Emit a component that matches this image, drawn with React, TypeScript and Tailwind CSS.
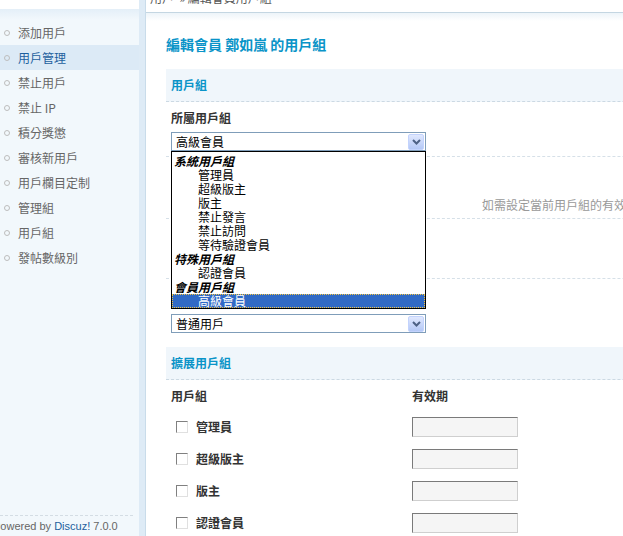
import React from "react"

const font = { fontFamily: '"Noto Sans CJK TC", "Noto Sans", sans-serif' }

const menu = ["添加用戶", "用戶管理", "禁止用戶", "禁止 IP", "積分獎懲", "審核新用戶", "用戶欄目定制", "管理組", "用戶組", "發帖數級別"]

const options: { label: string; group?: boolean; active?: boolean }[] = [
  { label: "系統用戶組", group: true },
  { label: "管理員" },
  { label: "超級版主" },
  { label: "版主" },
  { label: "禁止發言" },
  { label: "禁止訪問" },
  { label: "等待驗證會員" },
  { label: "特殊用戶組", group: true },
  { label: "認證會員" },
  { label: "會員用戶組", group: true },
  { label: "高級會員", active: true },
]

const extGroups = ["管理員", "超級版主", "版主", "認證會員"]

function SelectBox({ value }: { value: string }) {
  return (
    <div className="flex items-center w-[255px] h-[19px] border border-[#7f9db9] bg-white pl-[4px] pr-px">
      <span className="flex-1 text-[12px] text-black leading-none">{value}</span>
      <span className="w-[16px] h-[16px] flex items-center justify-center rounded-[2px] border border-[#c3d3fd] bg-gradient-to-b from-[#e0e8fe] to-[#b4c8f6]">
        <svg width="9" height="6" viewBox="0 0 9 6">
          <path d="M1 1 L4.5 4.5 L8 1" stroke="#4d6185" strokeWidth="2" fill="none" />
        </svg>
      </span>
    </div>
  )
}

function Checkbox() {
  return <span className="inline-block w-[12px] h-[12px] bg-white border-t border-l border-[#808080] border-b border-r border-b-[#e0e0e0] border-r-[#e0e0e0]" />
}

export default function App() {
  return (
    <div className="w-[623px] h-[536px] overflow-hidden flex bg-white" style={font}>
      {/* Sidebar */}
      <aside className="w-[146px] shrink-0 flex flex-col bg-[#f2f8fc] border-r border-[#c9dcea] relative">
        <div className="h-[9px] bg-white mr-[6px]" />
        <div className="h-[11px] bg-gradient-to-b from-[#e4eff8] to-[#f2f8fc]" />
        <ul className="flex-1 mr-[6px]">
          {menu.map((m) => (
            <li
              key={m}
              className={`h-[25px] flex items-center pl-[4px] text-[12px] ${m === "用戶管理" ? "bg-[#dceaf6] text-[#1d5f9e]" : "text-[#666]"}`}
            >
              <span className="w-[6px] h-[6px] rounded-full border border-[#bdbdbd] mr-[8px]" />
              {m}
            </li>
          ))}
        </ul>
        <div className="mr-[12px] border-t border-dashed border-[#d4dde4]" />
        <div className="h-[20px] pt-[5px] -ml-[7px] whitespace-nowrap text-[11px] text-[#666] leading-none" style={{ fontFamily: '"Liberation Sans", Arial, sans-serif' }}>
          Powered by <span className="text-[#1d5f9e]">Discuz!</span> 7.0.0
        </div>
        <div className="absolute right-0 top-0 bottom-0 w-[6px] bg-[#deebf6]" />
      </aside>

      {/* Main */}
      <main className="flex-1 min-w-0 overflow-hidden">
        <div className="h-[13px] border-b border-[#c4d6e2] pl-[4px] overflow-hidden">
          <div className="-mt-[11px] text-[12px] text-[#555] whitespace-nowrap">用戶 &nbsp;» 編輯會員用戶組</div>
        </div>
        <div className="h-[8px] bg-gradient-to-b from-[#edf4f9] to-white" />

        <div className="pl-[20px] w-[640px]">
          <h1 className="mt-[12px] h-[23px] text-[14px] font-bold text-[#0a94c8] leading-[23px]">編輯會員 鄭如嵐 的用戶組</h1>

          <div className="mt-[13px] h-[33px] bg-[#f0f6fb] border-b border-dashed border-[#ccd9e3] pl-[5px] flex items-center text-[12px] font-bold text-[#0a94c8]">
            用戶組
          </div>

          {/* 所屬用戶組 */}
          <div className="border-b border-dashed border-[#d6e0e8] pl-[5px] pt-[7px] pb-[5px]">
            <div className="text-[12px] font-bold text-[#333] leading-[17px]">所屬用戶組</div>
            <div className="mt-[6px] relative w-[255px]">
              <SelectBox value="高級會員" />
              {/* open option list */}
              <div className="absolute left-0 top-[19px] z-10 w-[255px] h-[158px] border border-black bg-white text-[12px] leading-[14px] text-black pt-[2px]">
                {options.map((o) =>
                  o.group ? (
                    <div key={o.label} className="pl-[2px] font-bold italic">{o.label}</div>
                  ) : (
                    <div key={o.label} className={`pl-[26px] ${o.active ? "bg-[#316ac5] text-white outline-1 outline-dotted outline-[#f5c542] -outline-offset-1" : ""}`}>
                      {o.label}
                    </div>
                  )
                )}
              </div>
            </div>
          </div>

          <div className="h-[62px] border-b border-dashed border-[#d6e0e8] pt-[34px]">
            <span className="ml-[316px] text-[12px] text-[#999]">如需設定當前用戶組的有效期請在此輸入</span>
          </div>
          <div className="h-[60px] border-b border-dashed border-[#d6e0e8]" />

          <div className="pl-[5px] pt-[35px] pb-[14px]">
            <SelectBox value="普通用戶" />
          </div>

          <div className="h-[33px] bg-[#f0f6fb] border-b border-dashed border-[#ccd9e3] pl-[5px] flex items-center text-[12px] font-bold text-[#0a94c8]">
            擴展用戶組
          </div>

          <div className="pl-[5px] h-[31px] flex items-center text-[12px] font-bold text-[#333]">
            <span className="w-[241px]">用戶組</span>
            <span>有效期</span>
          </div>
          {extGroups.map((g) => (
            <div key={g} className="pl-[5px] h-[32px] flex items-center text-[12px] font-bold text-[#333]">
              <span className="w-[241px] flex items-center">
                <span className="ml-[5px] mr-[8px] flex">
                  <Checkbox />
                </span>
                {g}
              </span>
              <span className="w-[106px] h-[20px] bg-[#f5f5f5] border border-t-[#7a7a7a] border-l-[#7a7a7a] border-b-[#cfcfcf] border-r-[#cfcfcf]" />
            </div>
          ))}
        </div>
      </main>
    </div>
  )
}
